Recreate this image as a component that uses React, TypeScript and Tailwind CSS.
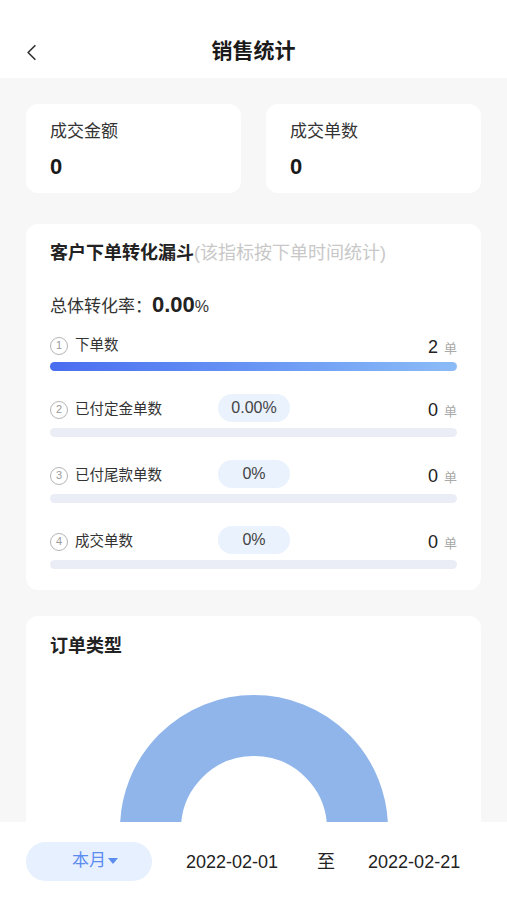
import { ChevronLeft } from "lucide-react";

const font = { fontFamily: '"Liberation Sans", "Noto Sans CJK SC", sans-serif' };

interface Step {
  no: number;
  label: string;
  rate?: string;
  count: number;
}

const steps: Step[] = [
  { no: 1, label: "下单数", count: 2 },
  { no: 2, label: "已付定金单数", rate: "0.00%", count: 0 },
  { no: 3, label: "已付尾款单数", rate: "0%", count: 0 },
  { no: 4, label: "成交单数", rate: "0%", count: 0 },
];

function StatCard({ label, value }: { label: string; value: string }) {
  return (
    <div className="flex-1 h-[89px] rounded-xl bg-white pl-6 pt-[16px]">
      <div className="text-[17px] leading-[24px] text-[#333]">{label}</div>
      <div className="mt-[10px] text-[22px] leading-[26px] font-bold text-[#1a1a1a]">{value}</div>
    </div>
  );
}

function FunnelRow({ step, first }: { step: Step; first: boolean }) {
  return (
    <div className={first ? "" : "mt-[23px]"}>
      <div className="flex h-[28px] items-center">
        <div className="flex w-[168px] items-center pt-[3px]">
          <span className="flex h-[18px] w-[18px] items-center justify-center rounded-full border border-[#b5b5b5] text-[11px] leading-none text-[#999]">
            {step.no}
          </span>
          <span className="ml-[7px] text-[14.5px] text-[#333]">{step.label}</span>
        </div>
        {step.rate && (
          <div className="flex h-[28px] w-[72px] items-center justify-center rounded-full bg-[#eaf2fd] text-[16px] text-[#444]">
            {step.rate}
          </div>
        )}
        <div className={`ml-auto flex items-baseline gap-[6px] ${first ? "mt-[7px]" : "mt-[5px]"}`}>
          <span className="text-[18px] text-[#222]">{step.count}</span>
          <span className="text-[13px] text-[#aaa]">单</span>
        </div>
      </div>
      {first ? (
        <div className="mt-[4px] h-[9px] rounded-full bg-gradient-to-r from-[#4a6cf0] to-[#8cbcf6]" />
      ) : (
        <div className="mt-[6px] h-[9px] rounded-full bg-[#ebedf6]" />
      )}
    </div>
  );
}

export default function App() {
  return (
    <div className="flex h-[900px] w-[507px] flex-col overflow-hidden bg-[#f7f7f7]" style={font}>
      {/* Header */}
      <div className="relative flex h-[78px] shrink-0 items-end justify-center bg-white pb-[12px]">
        <ChevronLeft className="absolute left-[18px] top-[39px] h-[27px] w-[27px] text-[#333]" strokeWidth={1.5} />
        <span className="text-[21px] font-bold text-[#1a1a1a]">销售统计</span>
      </div>

      {/* Content */}
      <div className="flex-1 overflow-hidden px-[26px] pt-[26px]">
        <div className="flex gap-[25px]">
          <StatCard label="成交金额" value="0" />
          <StatCard label="成交单数" value="0" />
        </div>

        <div className="mt-[31px] rounded-xl bg-white px-6 pt-[17px] pb-[21px]">
          <div className="flex h-6 items-center">
            <span className="text-[18px] font-bold text-[#222]">客户下单转化漏斗</span>
            <span className="text-[18px] text-[#c8c8c8]">(该指标按下单时间统计)</span>
          </div>
          <div className="mt-[23px] flex h-[28px] items-baseline">
            <span className="text-[17px] text-[#333]">总体转化率：</span>
            <span className="text-[22px] font-bold text-[#222]">0.00</span>
            <span className="text-[16px] text-[#333]">%</span>
          </div>
          <div className="mt-[14px]">
            {steps.map((s, i) => (
              <FunnelRow key={s.no} step={s} first={i === 0} />
            ))}
          </div>
        </div>

        <div className="mt-[26px] h-[400px] rounded-xl bg-white pt-[18px]">
          <div className="px-6 text-[18px] leading-6 font-bold text-[#222]">订单类型</div>
          <svg width="456" height="300" viewBox="0 0 456 300" className="mt-[22px]">
            <circle cx="228" cy="149" r="103.5" fill="none" stroke="#8fb5eb" strokeWidth="61" />
          </svg>
        </div>
      </div>

      {/* Bottom bar */}
      <div className="flex h-[78px] shrink-0 items-center bg-white px-[26px]">
        <div className="flex h-[39px] w-[126px] items-center justify-center rounded-full bg-[#e7f0fe] pl-[13px] text-[17px] text-[#5b8cf0]">
          本月
          <svg width="12" height="8" viewBox="0 0 12 8" className="ml-[1px]">
            <path d="M1 1 L11 1 L6 7 Z" fill="#5b8cf0" />
          </svg>
        </div>
        <div className="flex items-center pt-[3px]">
          <span className="ml-[34px] text-[18px] text-[#222]">2022-02-01</span>
          <span className="ml-[39px] text-[18px] text-[#222]">至</span>
          <span className="ml-[33px] text-[18px] text-[#222]">2022-02-21</span>
        </div>
      </div>
    </div>
  );
}
